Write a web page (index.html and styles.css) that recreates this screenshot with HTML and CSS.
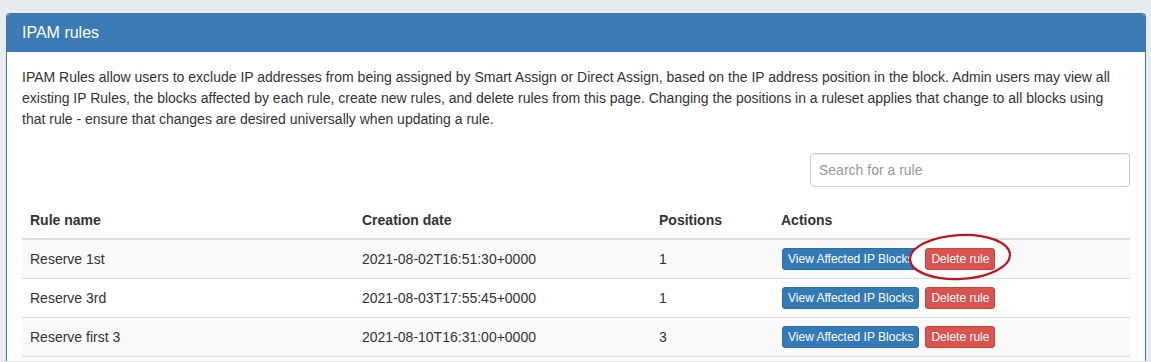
FILE: index.html
```html
<!DOCTYPE html>
<html>
<head>
<meta charset="utf-8">
<link rel="stylesheet" href="styles.css">
</head>
<body>
<div class="panel">
  <div class="panel-heading">IPAM rules</div>
  <div class="panel-body">
    <p class="intro">IPAM Rules allow users to exclude IP addresses from being assigned by Smart Assign or Direct Assign, based on the IP address position in the block. Admin users may view all existing IP Rules, the blocks affected by each rule, create new rules, and delete rules from this page. Changing the positions in a ruleset applies that change to all blocks using that rule - ensure that changes are desired universally when updating a rule.</p>
    <div class="search-row">
      <input class="search" type="text" placeholder="Search for a rule">
    </div>
    <table class="rules">
      <colgroup>
        <col class="c1"><col class="c2"><col class="c3"><col class="c4">
      </colgroup>
      <thead>
        <tr><th>Rule name</th><th>Creation date</th><th>Positions</th><th>Actions</th></tr>
      </thead>
      <tbody>
        <tr class="odd">
          <td>Reserve 1st</td><td>2021-08-02T16:51:30+0000</td><td>1</td>
          <td class="actions">
            <div class="btns"><span class="btn btn-blue">View Affected IP Blocks</span><span class="btn btn-red front">Delete rule</span></div>
            <svg class="mark" width="112" height="54" viewBox="0 0 112 54"><ellipse cx="56" cy="25" rx="50" ry="22" fill="#ffffff" stroke="#c0141f" stroke-width="2.2" transform="rotate(-3 56 25)"/></svg>
          </td>
        </tr>
        <tr>
          <td>Reserve 3rd</td><td>2021-08-03T17:55:45+0000</td><td>1</td>
          <td class="actions"><div class="btns"><span class="btn btn-blue">View Affected IP Blocks</span><span class="btn btn-red">Delete rule</span></div></td>
        </tr>
        <tr class="odd">
          <td>Reserve first 3</td><td>2021-08-10T16:31:00+0000</td><td>3</td>
          <td class="actions"><div class="btns"><span class="btn btn-blue">View Affected IP Blocks</span><span class="btn btn-red">Delete rule</span></div></td>
        </tr>
      </tbody>
    </table>
  </div>
</div>
</body>
</html>
```

FILE: styles.css
```css
html, body {
  margin: 0;
  padding: 0;
  background: #e9ecef;
  font-family: "Liberation Sans", Arial, sans-serif;
  font-size: 14px;
  color: #333;
}
body { height: 362px; overflow: hidden; }
.panel {
  margin: 13px 5px 0 6px;
  background: #fff;
  border: 1px solid #3c7ab6;
  border-bottom: none;
  border-radius: 4px 4px 0 0;
  height: 348px;
  box-sizing: border-box;
  overflow: hidden;
}
.panel-heading {
  background: #3c7ab6;
  color: #fff;
  font-size: 16px;
  line-height: 18px;
  padding: 10px 15px 10px 15px;
  border-radius: 3px 3px 0 0;
}
.panel-body {
  padding: 15px;
}
.intro {
  margin: 0;
  line-height: 21px;
}
.search-row {
  display: flex;
  justify-content: flex-end;
  margin-top: 23px;
}
.search {
  box-sizing: border-box;
  width: 320px;
  height: 34px;
  border: 1px solid #ccc;
  border-radius: 4px;
  padding: 0 8px;
  font-family: "Liberation Sans", Arial, sans-serif;
  font-size: 14px;
  color: #555;
  box-shadow: inset 0 1px 1px rgba(0,0,0,0.075);
}
.search::placeholder { color: #999; }
.rules {
  width: 100%;
  margin-top: 15px;
  border-collapse: collapse;
  table-layout: fixed;
}
.c1 { width: 332px; }
.c2 { width: 297px; }
.c3 { width: 122px; }
.rules th {
  text-align: left;
  font-weight: bold;
  padding: 8px;
  line-height: 20px;
  border-bottom: 2px solid #ddd;
}
.rules td {
  padding: 8px;
  line-height: 22px;
  border-top: 1px solid #ddd;
  vertical-align: middle;
}
.rules tbody tr:last-child td { border-bottom: 1px solid #ddd; }
.rules tr.odd td { background: #f9f9f9; }
.actions { position: relative; }
.btns {
  display: flex;
  gap: 6px;
  padding-left: 1px;
}
.btn {
  display: inline-block;
  box-sizing: border-box;
  height: 22px;
  line-height: 18px;
  padding: 1px 5px;
  border: 1px solid transparent;
  border-radius: 3px;
  font-size: 12px;
  color: #fff;
  white-space: nowrap;
}
.btn-blue { background: #337ab7; border-color: #2e6da4; }
.btn-red { background: #d9534f; border-color: #d43f3a; }
.front { position: relative; z-index: 2; }
.mark {
  position: absolute;
  left: 131px;
  top: -8px;
  z-index: 1;
}
```
